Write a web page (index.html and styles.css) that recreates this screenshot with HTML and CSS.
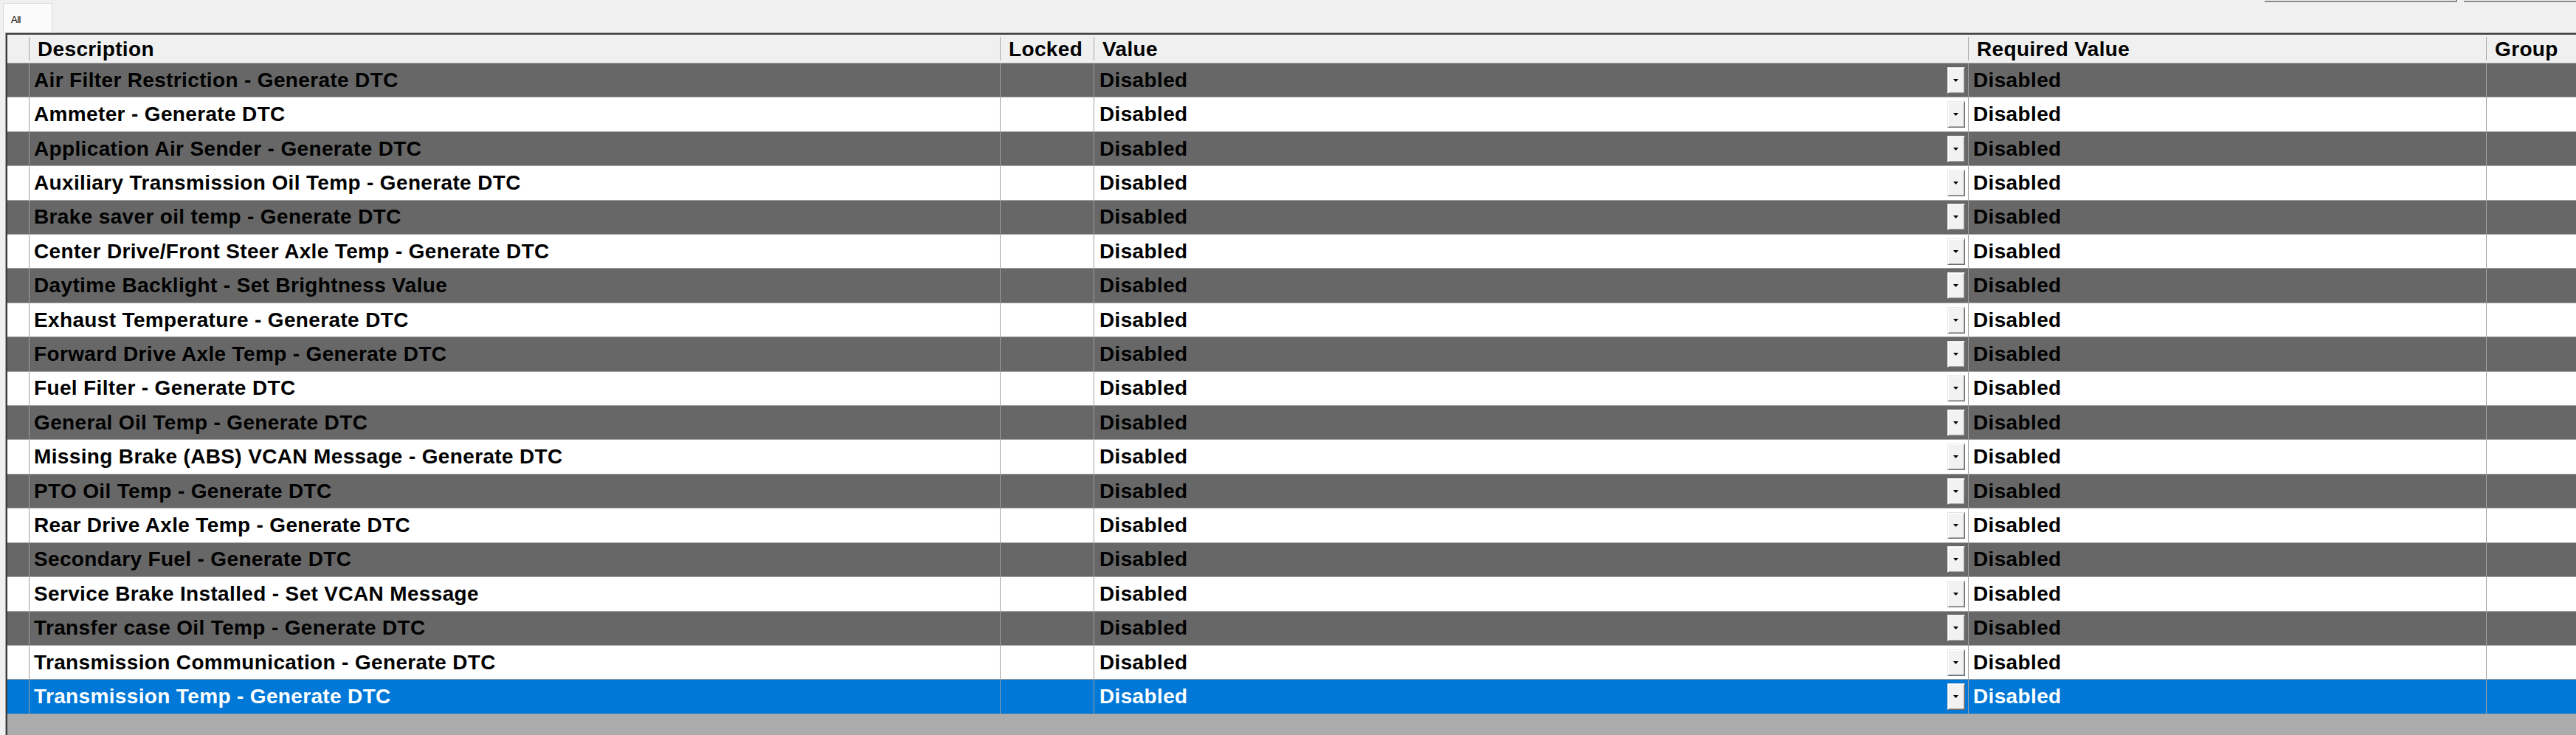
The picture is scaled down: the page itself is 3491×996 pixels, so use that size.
FILE: index.html
```html
<!DOCTYPE html>
<html>
<head>
<meta charset="utf-8">
<link rel="stylesheet" href="styles.css">
</head>
<body>
<div class="topbar">
  <div class="tbtn tbtn-a"></div>
  <div class="tbtn tbtn-b"></div>
</div>
<div class="tabs">
  <div class="tab">All</div>
</div>
<div class="grid-outer">
  <div class="grid">
    <div class="row head">
      <div class="c c0"></div>
      <div class="c c1">Description</div>
      <div class="c c2">Locked</div>
      <div class="c c3">Value</div>
      <div class="c c4">Required Value</div>
      <div class="c c5">Group</div>
    </div>
    <div id="rows"></div>
    <div class="row dark"><div class="c c0"></div><div class="c c1">Air Filter Restriction - Generate DTC</div><div class="c c2"></div><div class="c c3"><span class="v">Disabled</span><span class="dd"><svg width="8" height="5" viewBox="0 0 8 5"><path d="M0 0H7L3.5 4Z" fill="#000"/></svg></span></div><div class="c c4">Disabled</div><div class="c c5"></div></div>
    <div class="row"><div class="c c0"></div><div class="c c1">Ammeter - Generate DTC</div><div class="c c2"></div><div class="c c3"><span class="v">Disabled</span><span class="dd"><svg width="8" height="5" viewBox="0 0 8 5"><path d="M0 0H7L3.5 4Z" fill="#000"/></svg></span></div><div class="c c4">Disabled</div><div class="c c5"></div></div>
    <div class="row dark"><div class="c c0"></div><div class="c c1">Application Air Sender - Generate DTC</div><div class="c c2"></div><div class="c c3"><span class="v">Disabled</span><span class="dd"><svg width="8" height="5" viewBox="0 0 8 5"><path d="M0 0H7L3.5 4Z" fill="#000"/></svg></span></div><div class="c c4">Disabled</div><div class="c c5"></div></div>
    <div class="row"><div class="c c0"></div><div class="c c1">Auxiliary Transmission Oil Temp - Generate DTC</div><div class="c c2"></div><div class="c c3"><span class="v">Disabled</span><span class="dd"><svg width="8" height="5" viewBox="0 0 8 5"><path d="M0 0H7L3.5 4Z" fill="#000"/></svg></span></div><div class="c c4">Disabled</div><div class="c c5"></div></div>
    <div class="row dark"><div class="c c0"></div><div class="c c1">Brake saver oil temp - Generate DTC</div><div class="c c2"></div><div class="c c3"><span class="v">Disabled</span><span class="dd"><svg width="8" height="5" viewBox="0 0 8 5"><path d="M0 0H7L3.5 4Z" fill="#000"/></svg></span></div><div class="c c4">Disabled</div><div class="c c5"></div></div>
    <div class="row"><div class="c c0"></div><div class="c c1">Center Drive/Front Steer Axle Temp - Generate DTC</div><div class="c c2"></div><div class="c c3"><span class="v">Disabled</span><span class="dd"><svg width="8" height="5" viewBox="0 0 8 5"><path d="M0 0H7L3.5 4Z" fill="#000"/></svg></span></div><div class="c c4">Disabled</div><div class="c c5"></div></div>
    <div class="row dark"><div class="c c0"></div><div class="c c1">Daytime Backlight - Set Brightness Value</div><div class="c c2"></div><div class="c c3"><span class="v">Disabled</span><span class="dd"><svg width="8" height="5" viewBox="0 0 8 5"><path d="M0 0H7L3.5 4Z" fill="#000"/></svg></span></div><div class="c c4">Disabled</div><div class="c c5"></div></div>
    <div class="row"><div class="c c0"></div><div class="c c1">Exhaust Temperature - Generate DTC</div><div class="c c2"></div><div class="c c3"><span class="v">Disabled</span><span class="dd"><svg width="8" height="5" viewBox="0 0 8 5"><path d="M0 0H7L3.5 4Z" fill="#000"/></svg></span></div><div class="c c4">Disabled</div><div class="c c5"></div></div>
    <div class="row dark"><div class="c c0"></div><div class="c c1">Forward Drive Axle Temp - Generate DTC</div><div class="c c2"></div><div class="c c3"><span class="v">Disabled</span><span class="dd"><svg width="8" height="5" viewBox="0 0 8 5"><path d="M0 0H7L3.5 4Z" fill="#000"/></svg></span></div><div class="c c4">Disabled</div><div class="c c5"></div></div>
    <div class="row"><div class="c c0"></div><div class="c c1">Fuel Filter - Generate DTC</div><div class="c c2"></div><div class="c c3"><span class="v">Disabled</span><span class="dd"><svg width="8" height="5" viewBox="0 0 8 5"><path d="M0 0H7L3.5 4Z" fill="#000"/></svg></span></div><div class="c c4">Disabled</div><div class="c c5"></div></div>
    <div class="row dark"><div class="c c0"></div><div class="c c1">General Oil Temp - Generate DTC</div><div class="c c2"></div><div class="c c3"><span class="v">Disabled</span><span class="dd"><svg width="8" height="5" viewBox="0 0 8 5"><path d="M0 0H7L3.5 4Z" fill="#000"/></svg></span></div><div class="c c4">Disabled</div><div class="c c5"></div></div>
    <div class="row"><div class="c c0"></div><div class="c c1">Missing Brake (ABS) VCAN Message - Generate DTC</div><div class="c c2"></div><div class="c c3"><span class="v">Disabled</span><span class="dd"><svg width="8" height="5" viewBox="0 0 8 5"><path d="M0 0H7L3.5 4Z" fill="#000"/></svg></span></div><div class="c c4">Disabled</div><div class="c c5"></div></div>
    <div class="row dark"><div class="c c0"></div><div class="c c1">PTO Oil Temp - Generate DTC</div><div class="c c2"></div><div class="c c3"><span class="v">Disabled</span><span class="dd"><svg width="8" height="5" viewBox="0 0 8 5"><path d="M0 0H7L3.5 4Z" fill="#000"/></svg></span></div><div class="c c4">Disabled</div><div class="c c5"></div></div>
    <div class="row"><div class="c c0"></div><div class="c c1">Rear Drive Axle Temp - Generate DTC</div><div class="c c2"></div><div class="c c3"><span class="v">Disabled</span><span class="dd"><svg width="8" height="5" viewBox="0 0 8 5"><path d="M0 0H7L3.5 4Z" fill="#000"/></svg></span></div><div class="c c4">Disabled</div><div class="c c5"></div></div>
    <div class="row dark"><div class="c c0"></div><div class="c c1">Secondary Fuel - Generate DTC</div><div class="c c2"></div><div class="c c3"><span class="v">Disabled</span><span class="dd"><svg width="8" height="5" viewBox="0 0 8 5"><path d="M0 0H7L3.5 4Z" fill="#000"/></svg></span></div><div class="c c4">Disabled</div><div class="c c5"></div></div>
    <div class="row"><div class="c c0"></div><div class="c c1">Service Brake Installed - Set VCAN Message</div><div class="c c2"></div><div class="c c3"><span class="v">Disabled</span><span class="dd"><svg width="8" height="5" viewBox="0 0 8 5"><path d="M0 0H7L3.5 4Z" fill="#000"/></svg></span></div><div class="c c4">Disabled</div><div class="c c5"></div></div>
    <div class="row dark"><div class="c c0"></div><div class="c c1">Transfer case Oil Temp - Generate DTC</div><div class="c c2"></div><div class="c c3"><span class="v">Disabled</span><span class="dd"><svg width="8" height="5" viewBox="0 0 8 5"><path d="M0 0H7L3.5 4Z" fill="#000"/></svg></span></div><div class="c c4">Disabled</div><div class="c c5"></div></div>
    <div class="row"><div class="c c0"></div><div class="c c1">Transmission Communication - Generate DTC</div><div class="c c2"></div><div class="c c3"><span class="v">Disabled</span><span class="dd"><svg width="8" height="5" viewBox="0 0 8 5"><path d="M0 0H7L3.5 4Z" fill="#000"/></svg></span></div><div class="c c4">Disabled</div><div class="c c5"></div></div>
    <div class="row sel"><div class="c c0"></div><div class="c c1">Transmission Temp - Generate DTC</div><div class="c c2"></div><div class="c c3"><span class="v">Disabled</span><span class="dd"><svg width="8" height="5" viewBox="0 0 8 5"><path d="M0 0H7L3.5 4Z" fill="#000"/></svg></span></div><div class="c c4">Disabled</div><div class="c c5"></div></div>
    <div class="empty"></div>
  </div>
</div>
</body>
</html>
```
FILE: styles.css
```css
html, body {
  margin: 0;
  padding: 0;
}
body {
  width: 3491px;
  height: 996px;
  overflow: hidden;
  background: #f0f0f0;
  font-family: "Liberation Sans", Arial, sans-serif;
}
.topbar {
  display: flex;
  justify-content: flex-end;
  height: 3px;
  gap: 9px;
}
.tbtn {
  height: 1px;
  border-bottom: 2px solid #8a8a8a;
  box-sizing: content-box;
}
.tbtn-a {
  width: 259px;
  border-right: 2px solid #8a8a8a;
}
.tbtn-b {
  width: 151px;
  border-left: 1px solid #c8c8c8;
}
.tabs {
  display: flex;
  height: 41px;
  padding: 1px 0 0 4px;
  box-sizing: border-box;
}
.tab {
  width: 67px;
  height: 40px;
  box-sizing: border-box;
  background: #fbfbfb;
  border: 1px solid #dadada;
  border-bottom: none;
  font-size: 13px;
  color: #000;
  padding: 14px 0 0 10px;
  letter-spacing: -0.5px;
}
.grid-outer {
  margin-left: 7px;
  border-left: 1px solid #a0a0a0;
  border-top: 1px solid #a0a0a0;
  height: 952px;
  box-sizing: border-box;
}
.grid {
  border-left: 2px solid #3c3c3c;
  border-top: 2px solid #3c3c3c;
  height: 100%;
  box-sizing: border-box;
  display: flex;
  flex-direction: column;
}
.row {
  display: flex;
  height: 46.42px;
  flex: none;
  box-sizing: border-box;
  border-bottom: 1px solid #a0a0a0;
  background: #fff;
  color: #000;
  font-weight: bold;
  font-size: 28px;
  letter-spacing: 0.35px;
}
.row.dark {
  background: #676767;
}
.row.sel {
  background: #0078d7;
  color: #fff;
}
.c {
  box-sizing: border-box;
  border-right: 1px solid #a0a0a0;
  display: flex;
  align-items: center;
  padding-left: 6px;
  white-space: nowrap;
  overflow: hidden;
}
.c0 { width: 30px; padding: 0; }
.c1 { width: 1316px; }
.c2 { width: 127px; }
.c3 { width: 1185px; padding-left: 7px; padding-right: 4px; }
.c4 { width: 702px; padding-left: 6px; }
.c5 { flex: 1; border-right: none; }
.v { flex: 1; }
.dd {
  width: 24px;
  height: 36px;
  box-sizing: border-box;
  background: #f2f2f2;
  border: 1px solid;
  border-color: #e6e6e6 #6e6e6e #6e6e6e #e6e6e6;
  box-shadow: inset 1px 1px 0 #ffffff, inset -1px -1px 0 #a8a8a8;
  display: flex;
  align-items: center;
  justify-content: center;
  padding-top: 1px;
}
.dd svg { display: block; }
.row.head {
  height: 39px;
  background: #f0f0f0;
  border-bottom: 1px solid #a8a8a8;
}
.head .c {
  border-right: none;
  position: relative;
  padding-left: 11px;
  padding-top: 1px;
}
.head .c0 { padding: 0; }
.head .c::after {
  content: "";
  position: absolute;
  right: 0;
  top: 3px;
  bottom: 3px;
  width: 1px;
  background: #a8a8a8;
}
.head .c5::after { display: none; }
.empty {
  flex: 1;
  background: #ababab;
}
#rows { display: none; }
```
